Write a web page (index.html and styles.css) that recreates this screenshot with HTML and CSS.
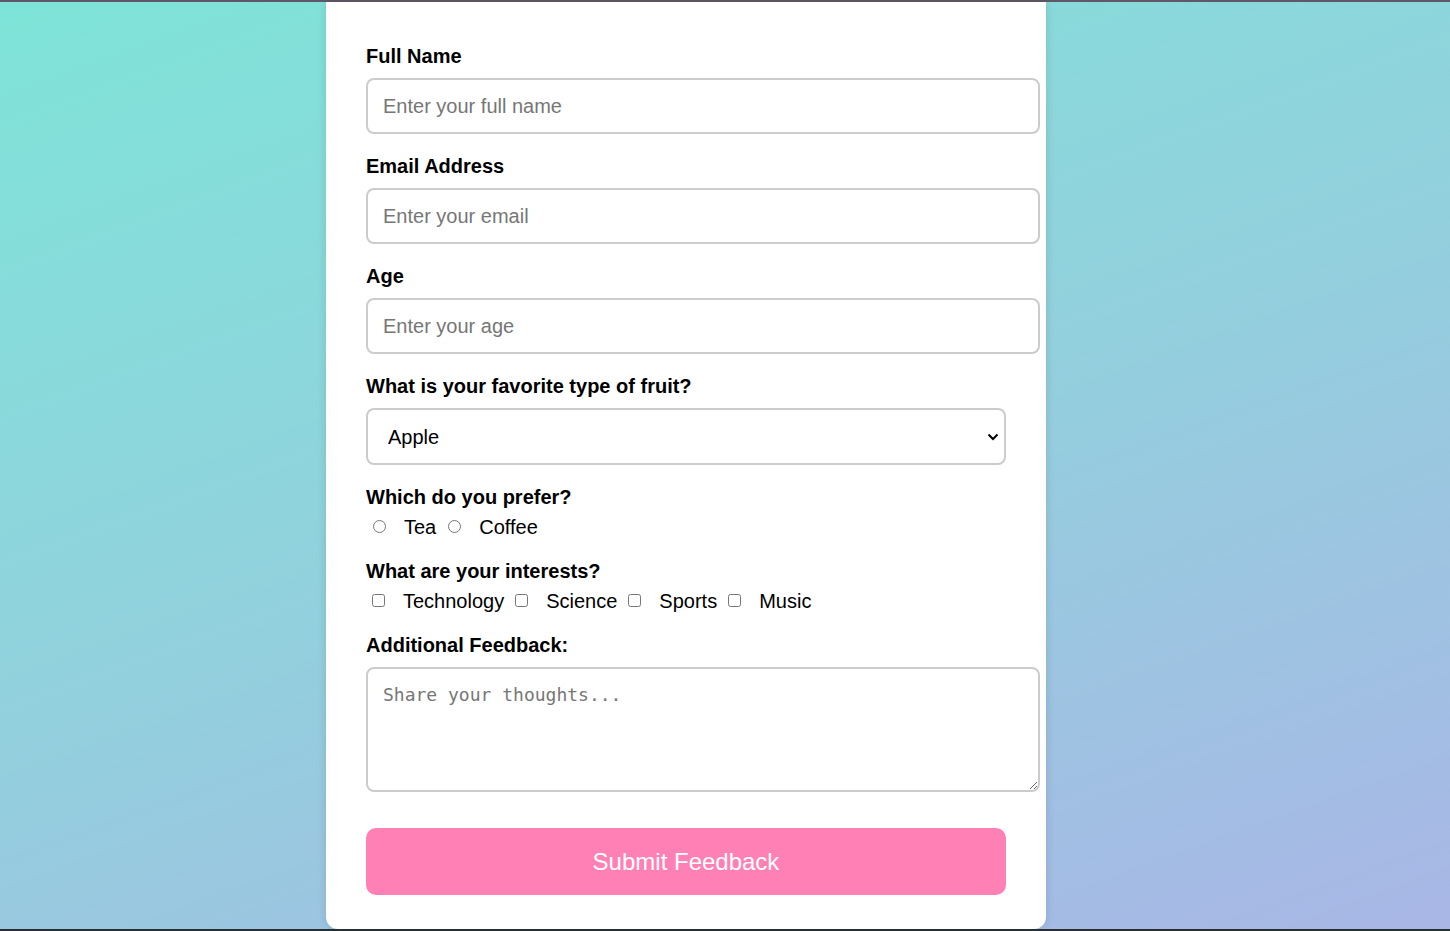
FILE: index.html
```html
<!DOCTYPE html>
<html lang="en">
<head>
<meta charset="utf-8">
<title>Feedback Form</title>
<link rel="stylesheet" href="styles.css">
</head>
<body>
<div class="topline"></div>
<main class="page">
  <form class="card">
    <div class="field">
      <label class="label" for="name">Full Name</label>
      <input class="text-input" id="name" type="text" placeholder="Enter your full name">
    </div>
    <div class="field">
      <label class="label" for="email">Email Address</label>
      <input class="text-input" id="email" type="email" placeholder="Enter your email">
    </div>
    <div class="field">
      <label class="label" for="age">Age</label>
      <input class="text-input" id="age" type="text" placeholder="Enter your age">
    </div>
    <div class="field">
      <label class="label" for="fruit">What is your favorite type of fruit?</label>
      <div class="select-wrap">
        <select class="select" id="fruit">
          <option>Apple</option>
          <option>Banana</option>
          <option>Orange</option>
        </select>
        <svg class="chevron" width="12" height="8" viewBox="0 0 12 8"><path d="M1.5 1.5 L6 6 L10.5 1.5" fill="none" stroke="#000" stroke-width="2"/></svg>
      </div>
    </div>
    <div class="field">
      <span class="label">Which do you prefer?</span>
      <div class="choices">
        <label class="choice"><input class="radio" type="radio" name="drink"><span>Tea</span></label>
        <label class="choice"><input class="radio" type="radio" name="drink"><span>Coffee</span></label>
      </div>
    </div>
    <div class="field">
      <span class="label">What are your interests?</span>
      <div class="choices">
        <label class="choice"><input class="check" type="checkbox"><span>Technology</span></label>
        <label class="choice"><input class="check" type="checkbox"><span>Science</span></label>
        <label class="choice"><input class="check" type="checkbox"><span>Sports</span></label>
        <label class="choice"><input class="check" type="checkbox"><span>Music</span></label>
      </div>
    </div>
    <div class="field">
      <label class="label" for="fb">Additional Feedback:</label>
      <textarea class="textarea" id="fb" placeholder="Share your thoughts..."></textarea>
    </div>
    <button class="submit" type="button">Submit Feedback</button>
  </form>
</main>
<div class="bottomline"></div>
</body>
</html>
```
FILE: styles.css
```css
* { box-sizing: border-box; }
html, body { margin: 0; padding: 0; }
body {
  height: 931px;
  overflow: hidden;
  font-family: "Liberation Sans", Arial, sans-serif;
  background: linear-gradient(160deg, #7ee4d8 0%, #92d0dd 50%, #a9b6e6 100%);
  display: flex;
  flex-direction: column;
}
.topline { height: 2px; background: #5f5868; flex: none; }
.bottomline { height: 2px; background: #263034; flex: none; }
.page {
  flex: 1;
  display: flex;
  justify-content: flex-start;
  padding-left: 326px;
  min-height: 0;
}
.card {
  width: 720px;
  background: #fff;
  padding: 43px 40px 34px;
  border-radius: 0 0 12px 12px;
  box-shadow: 0 0 10px rgba(0, 0, 0, 0.12);
  display: flex;
  flex-direction: column;
  height: 927px;
}
.field { margin-bottom: 21px; }
.label {
  display: block;
  font-weight: bold;
  font-size: 20px;
  line-height: 23px;
  color: #000;
  margin-bottom: 10px;
}
.text-input {
  display: block;
  box-sizing: content-box;
  width: 100%;
  height: 22px;
  padding: 15px;
  border: 2px solid #cccccc;
  border-radius: 8px;
  font-family: "Liberation Sans", Arial, sans-serif;
  font-size: 20px;
  color: #000;
  outline: none;
}
.text-input::placeholder { color: #767676; }
.select-wrap { position: relative; width: 640px; }
.select {
  display: block;
  width: 640px;
  height: 57px;
  padding: 0 0 0 20px;
  border: 2px solid #cccccc;
  border-radius: 8px;
  font-family: "Liberation Sans", Arial, sans-serif;
  font-size: 20px;
  color: #000;
  background: #fff;
  appearance: none;
  -webkit-appearance: none;
  outline: none;
}
.chevron { position: absolute; right: 7px; top: 25px; pointer-events: none; }
.choices { display: flex; align-items: center; margin-top: -3px; }
.choice {
  display: flex;
  align-items: center;
  font-size: 20px;
  color: #000;
  line-height: 23px;
}
.choice span { margin-left: 18px; margin-right: 5px; }
.radio { width: 13px; height: 13px; margin: 0 0 3px 7px; }
.check { width: 13px; height: 13px; margin: 0 0 3px 6px; }
.textarea {
  display: block;
  box-sizing: content-box;
  width: 100%;
  height: 91px;
  padding: 15px;
  border: 2px solid #cccccc;
  border-radius: 8px;
  font-family: "DejaVu Sans Mono", "Liberation Mono", monospace;
  font-size: 18px;
  outline: none;
  resize: vertical;
}
.textarea::placeholder { color: #767676; }
.submit {
  margin-top: 15px;
  width: 640px;
  height: 67px;
  border: none;
  border-radius: 10px;
  background: #ff80b4;
  color: #fff;
  font-family: "Liberation Sans", Arial, sans-serif;
  font-size: 24px;
  cursor: pointer;
}
```
